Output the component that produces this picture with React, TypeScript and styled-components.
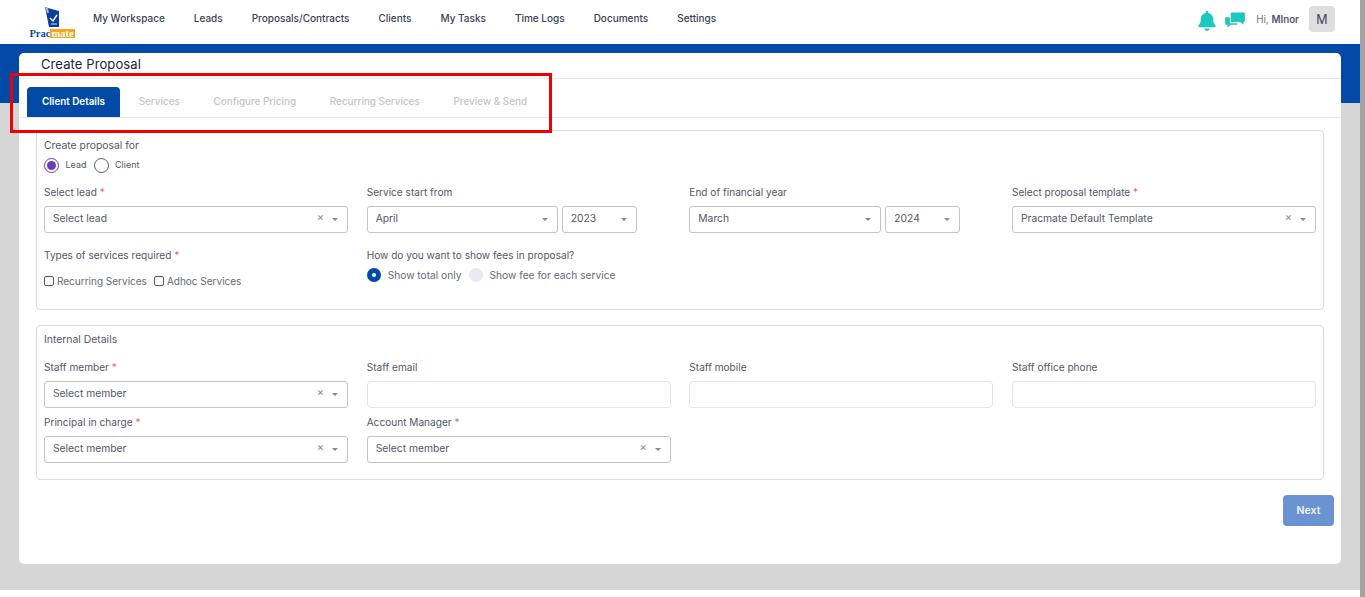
import React from 'react';
import styled, { createGlobalStyle } from 'styled-components';
import { FaBell } from 'react-icons/fa';

const GlobalStyle = createGlobalStyle`
  html, body {
    margin: 0;
    padding: 0;
    background: #fff;
    overflow: hidden;
  }
  * {
    box-sizing: border-box;
  }
  body {
    font-family: Inter, "Open Sans", sans-serif;
    color: #55566a;
  }
`;

const Shell = styled.div`
  display: flex;
  width: 1365px;
  height: 597px;
`;

const Main = styled.div`
  flex: 1;
  min-width: 0;
`;

const Scrollbar = styled.div`
  width: 5px;
  background: #a3a3a3;
`;

const Header = styled.header`
  height: 44px;
  display: flex;
  padding: 0 25px 0 29px;
  background: #fff;
`;

const Logo = styled.div`
  width: 46px;
  display: flex;
  flex-direction: column;
  align-items: center;
  padding-top: 7px;
`;

const LogoWords = styled.div`
  display: flex;
  margin-top: 2px;
  font-family: "Liberation Serif", serif;
  font-size: 10.5px;
  font-weight: 700;
  line-height: 9px;
  white-space: nowrap;
  color: #0b4aa6;
`;

const LogoMate = styled.span`
  padding: 0 1px;
  color: #fff;
  background: #f5a81c;
`;

const Nav = styled.nav`
  display: flex;
  gap: 29px;
  margin-left: 18px;
  padding-top: 11px;
`;

const NavLink = styled.a`
  font-size: 10px;
  font-weight: 500;
  line-height: 14px;
  color: #3c3f58;
`;

const UserArea = styled.div`
  margin-left: auto;
  display: flex;
  align-items: center;
  height: 38px;
`;

const Bell = styled(FaBell)`
  width: 18px;
  height: 20px;
  margin-top: 4px;
  color: #1dc8c0;
`;

const ChatIcon = styled.svg`
  width: 20px;
  height: 16px;
  margin-top: 2px;
  margin-left: 9px;
  color: #1dc8c0;
`;

const Greeting = styled.span`
  margin-left: 11px;
  font-size: 9.8px;
  color: #77788a;
`;

const GreetingName = styled.b`
  font-weight: 600;
  color: #55566a;
`;

const Avatar = styled.div`
  width: 26px;
  height: 26px;
  margin-left: 10px;
  display: flex;
  align-items: center;
  justify-content: center;
  border-radius: 4px;
  background: #dedede;
  font-size: 12.5px;
  color: #3c3f58;
`;

const Backdrop = styled.div`
  height: 546px;
  padding: 9px 19px 0;
  background: linear-gradient(#034aa6 0, #034aa6 59px, #d6d6d6 59px);
`;

const Card = styled.main`
  width: 1322px;
  height: 511px;
  border-radius: 5px;
  background: #fff;
`;

const Title = styled.h1`
  height: 26px;
  margin: 0;
  padding: 2px 0 0 22px;
  border-bottom: 1px solid #e6e6ef;
  font-size: 13px;
  font-weight: 400;
  letter-spacing: 0.1px;
  line-height: 18px;
  color: #232338;
`;

const Tabs = styled.div`
  height: 39px;
  display: flex;
  align-items: flex-end;
  gap: 3.75px;
  padding-left: 8px;
  border-bottom: 1px solid #e6e6ef;
`;

const Tab = styled.div<{ $active?: boolean }>`
  height: 30px;
  padding: 0 15px 2px;
  display: flex;
  align-items: center;
  border-radius: 4px 4px 0 0;
  font-size: ${(p) => (p.$active ? 9.85 : 9.9)}px;
  font-weight: ${(p) => (p.$active ? 600 : 500)};
  color: ${(p) => (p.$active ? '#fff' : '#c2c3cf')};
  background: ${(p) => (p.$active ? '#034aa6' : 'transparent')};
`;

const Section = styled.section<{ $height?: number }>`
  height: ${(p) => (p.$height ? `${p.$height}px` : 'auto')};
  margin: 12px 17px 0;
  padding: 6px 7px 0;
  border: 1px solid #dcdcdc;
  border-radius: 4px;
`;

const InternalSection = styled(Section)`
  margin-top: 15px;
  padding: 5px 7px 16px;
`;

const Text = styled.div`
  height: 16px;
  font-size: 10.4px;
  line-height: 18px;
  color: #55566a;
`;

const RadioRow = styled.div`
  display: flex;
  align-items: center;
  margin-top: 4px;
  height: 16px;
`;

const Radio = styled.span<{ $checked?: boolean }>`
  width: 15px;
  height: 15px;
  flex: none;
  display: flex;
  align-items: center;
  justify-content: center;
  border-radius: 50%;
  border: 1px solid ${(p) => (p.$checked ? '#6a3db8' : '#55566a')};
  &::after {
    content: '';
    width: 9px;
    height: 9px;
    border-radius: 50%;
    background: ${(p) => (p.$checked ? '#6a3db8' : 'transparent')};
  }
`;

const RadioLabel = styled.span`
  margin: 0 7px 2px 6.5px;
  font-size: 9px;
  color: #55566a;
`;

const FeeRadio = styled.span<{ $checked?: boolean }>`
  width: 14px;
  height: 14px;
  flex: none;
  display: flex;
  align-items: center;
  justify-content: center;
  border-radius: 50%;
  background: ${(p) => (p.$checked ? '#034aa6' : '#e9ebf3')};
  &::after {
    content: '';
    width: 4px;
    height: 4px;
    border-radius: 50%;
    background: ${(p) => (p.$checked ? '#fff' : 'transparent')};
  }
`;

const FeeLabel = styled.span`
  margin: 0 7px;
  font-size: 10.2px;
  color: #66677a;
`;

const Grid = styled.div<{ $top: number }>`
  display: grid;
  grid-template-columns: repeat(4, 304px);
  column-gap: 18.67px;
  margin-top: ${(p) => p.$top}px;
`;

const Label = styled.label`
  display: block;
  height: 22px;
  font-size: 10.1px;
  line-height: 16px;
  color: #55566a;
`;

const Required = styled.span`
  color: #e66a6a;
`;

const SelectBox = styled.div<{ $width?: number }>`
  width: ${(p) => (p.$width ? `${p.$width}px` : '100%')};
  height: 27px;
  display: flex;
  align-items: center;
  padding: 0 8px 2px;
  border: 1px solid #c4c4c4;
  border-radius: 3px;
  background: #fff;
  font-size: 10.3px;
  color: #55566a;
`;

const SelectValue = styled.span`
  flex: 1;
  margin-bottom: 2px;
`;

const Clear = styled.span`
  position: relative;
  top: -1px;
  margin-right: 8px;
  font-size: 11px;
  line-height: 11px;
  color: #8a8a8a;
`;

const Caret = styled.span`
  width: 0;
  height: 0;
  margin: 2px 1px 0 0;
  border-left: 3px solid transparent;
  border-right: 3px solid transparent;
  border-top: 3px solid #8a8a8a;
`;

const Pair = styled.div`
  display: flex;
  gap: 4px;
`;

const Input = styled.div`
  height: 27px;
  border: 1px solid #e4e4ee;
  border-radius: 4px;
  background: #fff;
`;

const CheckRow = styled.div`
  display: flex;
  align-items: center;
  margin-top: 4px;
  height: 16px;
`;

const CheckBox = styled.span`
  width: 10px;
  height: 10px;
  margin-right: 3px;
  border: 1px solid #55566a;
  border-radius: 2px;
`;

const CheckLabel = styled.span`
  margin-right: 7px;
  font-size: 10px;
  color: #66677a;
`;

const FeeRow = styled.div`
  display: flex;
  align-items: center;
  height: 16px;
  margin-top: -2px;
`;

const Spaced = styled.div`
  margin-top: 6px;
`;

const Actions = styled.div`
  display: flex;
  justify-content: flex-end;
  margin-top: 15px;
  padding-right: 7px;
`;

const NextButton = styled.button`
  width: 51px;
  height: 31px;
  border: 0;
  border-radius: 4px;
  background: #6b93d2;
  font-family: inherit;
  font-size: 10.5px;
  font-weight: 600;
  color: #eef3fb;
`;

const Highlight = styled.div`
  position: absolute;
  left: 10px;
  top: 73px;
  width: 542px;
  height: 60px;
  border: 3px solid #f00000;
  pointer-events: none;
`;

const navItems = [
  'My Workspace',
  'Leads',
  'Proposals/Contracts',
  'Clients',
  'My Tasks',
  'Time Logs',
  'Documents',
  'Settings',
];

const tabs = [
  'Client Details',
  'Services',
  'Configure Pricing',
  'Recurring Services',
  'Preview & Send',
];

function Select(props: { value: string; clearable?: boolean; width?: number }) {
  return (
    <SelectBox $width={props.width}>
      <SelectValue>{props.value}</SelectValue>
      {props.clearable && <Clear>×</Clear>}
      <Caret />
    </SelectBox>
  );
}

function FieldLabel(props: { text: string; required?: boolean }) {
  return (
    <Label>
      {props.text} {props.required && <Required>*</Required>}
    </Label>
  );
}

export default function App() {
  return (
    <>
      <GlobalStyle />
      <Shell>
        <Main>
          <Header>
            <Logo>
              <svg width="15" height="20" viewBox="0 0 15 20">
                <path d="M0 0 L3 1 L14 4 L14 20 L4 20 Z" fill="#0b3f9a" />
                <path d="M0 0 L3 1 L4 6 L2 6 Z" fill="#9db4d6" />
                <path d="M5 11 L8 14 L12 8" fill="none" stroke="#fff" strokeWidth="1.4" />
                <path d="M6 17 H12" stroke="#cfe0f5" strokeWidth="1" />
              </svg>
              <LogoWords>
                Prac<LogoMate>mate</LogoMate>
              </LogoWords>
            </Logo>
            <Nav>
              {navItems.map((item) => (
                <NavLink key={item}>{item}</NavLink>
              ))}
            </Nav>
            <UserArea>
              <Bell />
              <ChatIcon viewBox="0 0 21 17">
                <path
                  fill="currentColor"
                  d="M1 5.5 H5 V12 H13 V13.5 H6 L2.5 16.5 V13.5 H1 Q0 13.5 0 12.5 V6.5 Q0 5.5 1 5.5 Z"
                />
                <path
                  fill="currentColor"
                  d="M7 0.5 H20 Q21 0.5 21 1.5 V9.5 Q21 10.5 20 10.5 H19.5 V13.5 L16 10.5 H7 Q6 10.5 6 9.5 V1.5 Q6 0.5 7 0.5 Z"
                />
              </ChatIcon>
              <Greeting>
                Hi, <GreetingName>MInor</GreetingName>
              </Greeting>
              <Avatar>M</Avatar>
            </UserArea>
          </Header>
          <Backdrop>
            <Card>
              <Title>Create Proposal</Title>
              <Tabs>
                {tabs.map((tab, i) => (
                  <Tab key={tab} $active={i === 0}>
                    {tab}
                  </Tab>
                ))}
              </Tabs>
              <Section $height={180}>
                <Text>Create proposal for</Text>
                <RadioRow>
                  <Radio $checked />
                  <RadioLabel>Lead</RadioLabel>
                  <Radio />
                  <RadioLabel>Client</RadioLabel>
                </RadioRow>
                <Grid $top={11}>
                  <div>
                    <FieldLabel text="Select lead" required />
                    <Select value="Select lead" clearable />
                  </div>
                  <div>
                    <FieldLabel text="Service start from" />
                    <Pair>
                      <Select value="April" width={191} />
                      <Select value="2023" width={75} />
                    </Pair>
                  </div>
                  <div>
                    <FieldLabel text="End of financial year" />
                    <Pair>
                      <Select value="March" width={192} />
                      <Select value="2024" width={75} />
                    </Pair>
                  </div>
                  <div>
                    <FieldLabel text="Select proposal template" required />
                    <Select value="Pracmate Default Template" clearable />
                  </div>
                </Grid>
                <Grid $top={14}>
                  <div>
                    <FieldLabel text="Types of services required" required />
                    <CheckRow>
                      <CheckBox />
                      <CheckLabel>Recurring Services</CheckLabel>
                      <CheckBox />
                      <CheckLabel>Adhoc Services</CheckLabel>
                    </CheckRow>
                  </div>
                  <div>
                    <FieldLabel text="How do you want to show fees in proposal?" />
                    <FeeRow>
                      <FeeRadio $checked />
                      <FeeLabel>Show total only</FeeLabel>
                      <FeeRadio />
                      <FeeLabel>Show fee for each service</FeeLabel>
                    </FeeRow>
                  </div>
                </Grid>
              </Section>
              <InternalSection>
                <Text>Internal Details</Text>
                <Grid $top={12}>
                  <div>
                    <FieldLabel text="Staff member" required />
                    <Select value="Select member" clearable />
                  </div>
                  <div>
                    <FieldLabel text="Staff email" />
                    <Input />
                  </div>
                  <div>
                    <FieldLabel text="Staff mobile" />
                    <Input />
                  </div>
                  <div>
                    <FieldLabel text="Staff office phone" />
                    <Input />
                  </div>
                </Grid>
                <Spaced>
                  <Grid $top={0}>
                    <div>
                      <FieldLabel text="Principal in charge" required />
                      <Select value="Select member" clearable />
                    </div>
                    <div>
                      <FieldLabel text="Account Manager" required />
                      <Select value="Select member" clearable />
                    </div>
                  </Grid>
                </Spaced>
              </InternalSection>
              <Actions>
                <NextButton>Next</NextButton>
              </Actions>
            </Card>
          </Backdrop>
        </Main>
        <Scrollbar />
      </Shell>
      <Highlight />
    </>
  );
}
